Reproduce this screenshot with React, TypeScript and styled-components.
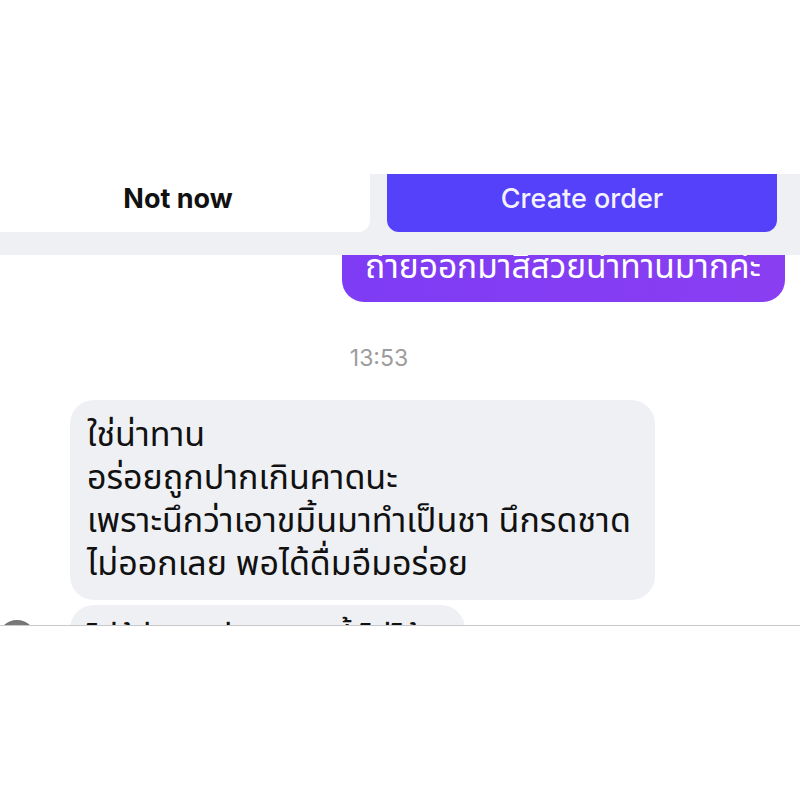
import React from "react";
import styled, { createGlobalStyle } from "styled-components";

const GlobalStyle = createGlobalStyle`
  html, body {
    margin: 0;
    padding: 0;
    background: #ffffff;
  }
  body {
    font-family: Inter, "Noto Sans", "Noto Sans Thai", sans-serif;
  }
`;

const Page = styled.div`
  width: 800px;
  height: 800px;
  display: flex;
  flex-direction: column;
  overflow: hidden;
  background: #ffffff;
`;

const TopSpace = styled.div`
  height: 174px;
  flex-shrink: 0;
`;

const ActionBar = styled.div`
  height: 81px;
  flex-shrink: 0;
  display: flex;
  align-items: flex-start;
  gap: 17px;
  padding-right: 23px;
  background: #eff0f4;
  position: relative;
  z-index: 1;
`;

const BarButton = styled.button<{ $primary?: boolean }>`
  height: 58px;
  width: ${({ $primary }) => ($primary ? "390px" : "370px")};
  border: none;
  margin: 0;
  font-family: Inter, "Noto Sans", sans-serif;
  font-size: 27px;
  font-weight: ${({ $primary }) => ($primary ? 500 : 700)};
  color: ${({ $primary }) => ($primary ? "#f4f2ff" : "#111111")};
  background: ${({ $primary }) => ($primary ? "#5441f9" : "#ffffff")};
  border-radius: ${({ $primary }) => ($primary ? "0 0 12px 12px" : "0 0 12px 0")};
  padding: 0 ${({ $primary }) => ($primary ? "0" : "14px")} 10px 0;
`;

const Chat = styled.div`
  height: 370px;
  flex-shrink: 0;
  overflow: hidden;
  display: flex;
  flex-direction: column;
  & > * {
    flex-shrink: 0;
  }
`;

const OutBubble = styled.div`
  align-self: flex-end;
  margin: -30px 15px 0 0;
  width: 443px;
  height: 77px;
  box-sizing: border-box;
  padding: 23px 0 0 23px;
  background: linear-gradient(90deg, #7e3cf4, #8a3ef2);
  border-radius: 22px;
  color: #ffffff;
  font-family: "Noto Sans Thai", "Noto Sans", sans-serif;
  font-size: 33.5px;
  line-height: 40px;
  white-space: nowrap;
`;

const Time = styled.div`
  margin-top: 42px;
  text-align: center;
  color: #9c9c9c;
  font-family: Inter, "Noto Sans", sans-serif;
  font-size: 23px;
  line-height: 28px;
  padding-left: 158px;
  padding-right: 200px;
`;

const InRow = styled.div<{ $first?: boolean }>`
  display: flex;
  align-items: flex-start;
  margin-top: ${({ $first }) => ($first ? "28px" : "5px")};
  padding-left: 70px;
  position: relative;
`;

const InBubble = styled.div<{ $w: number }>`
  width: ${({ $w }) => $w}px;
  box-sizing: border-box;
  padding: 14px 16px 14px 17px;
  background: #eff0f4;
  border-radius: 24px;
  color: #111111;
  font-family: "Noto Sans Thai", "Noto Sans", sans-serif;
  font-size: 34px;
  line-height: 43px;
  white-space: pre-line;
`;

const Avatar = styled.div`
  position: absolute;
  left: -2px;
  top: 15px;
  width: 38px;
  height: 38px;
  border-radius: 50%;
  background: radial-gradient(circle at 50% 30%, #8a8a8a, #4a4a4a);
`;

const Bottom = styled.div`
  flex: 1;
  border-top: 1px solid #c9c9cc;
  background: #ffffff;
`;

export default function App() {
  return (
    <>
      <GlobalStyle />
      <Page>
        <TopSpace />
        <ActionBar>
          <BarButton>Not now</BarButton>
          <BarButton $primary>Create order</BarButton>
        </ActionBar>
        <Chat>
          <OutBubble>ถ่ายออกมาสีสวยน่าทานมากค่ะ</OutBubble>
          <Time>13:53</Time>
          <InRow $first>
            <InBubble $w={585}>
              {"ใช่น่าทาน\nอร่อยถูกปากเกินคาดนะ\nเพราะนึกว่าเอาขมิ้นมาทำเป็นชา นึกรดชาด\nไม่ออกเลย  พอได้ดื่มอืมอร่อย"}
            </InBubble>
          </InRow>
          <InRow>
            <Avatar />
            <InBubble $w={395}>ไม่รู้ว่าจะอร่อยแบบนี้ ไม่ได้ชิมมาก่อนค่ะ</InBubble>
          </InRow>
        </Chat>
        <Bottom />
      </Page>
    </>
  );
}
